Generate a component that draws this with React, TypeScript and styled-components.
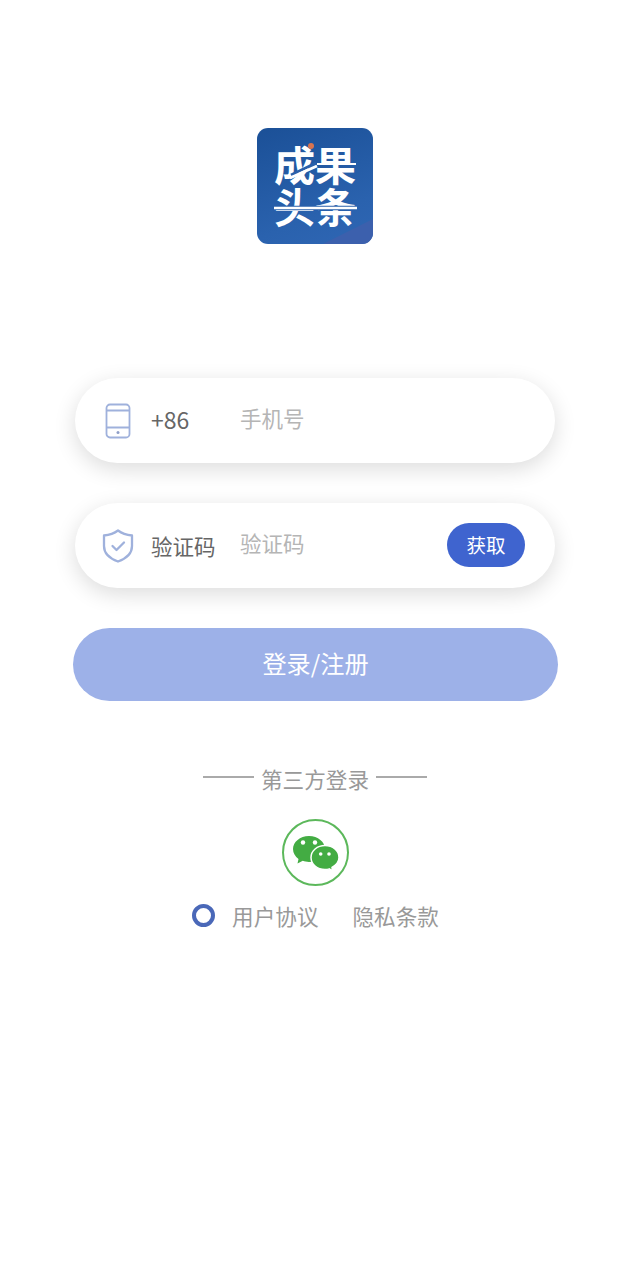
import React from "react";
import styled, { createGlobalStyle } from "styled-components";

const Global = createGlobalStyle`
  html, body { margin: 0; padding: 0; background: #fff; }
  body { font-family: "Noto Sans CJK SC", "Noto Sans", sans-serif; }
`;
const Page = styled.div`
  width: 630px; height: 1280px; display: flex; flex-direction: column; align-items: center;
  padding-top: 128px; box-sizing: border-box; overflow: hidden; background: #fff;
`;
const Logo = styled.div`
  position: relative; width: 116px; height: 116px; border-radius: 11px; overflow: hidden;
  background: linear-gradient(160deg, #1b5097 0%, #2a62ae 70%, #2f66b4 100%);
  display: flex; align-items: center; justify-content: center;
  margin-bottom: 134px;
`;
const LogoOverlay = styled.svg`
  position: absolute; left: 0; top: 0; width: 116px; height: 116px;
`;
const LogoText = styled.div`
  width: 84px; font-weight: 700; font-size: 41px; line-height: 42px; color: #fff;
  letter-spacing: 0; text-align: center; word-break: break-all; margin-top: -5px;
`;
const Field = styled.div`
  width: 480px; height: 85px; border-radius: 43px; background: #fff;
  box-shadow: 0 6px 22px rgba(0, 0, 0, 0.14);
  display: flex; align-items: center; box-sizing: border-box; padding: 0 30px 0 27px;
  margin-bottom: 40px;
`;
const IconSlot = styled.div`
  width: 32px; height: 38px; display: flex; align-items: center; justify-content: center; flex: none; margin-right: 17px;
`;
const Prefix = styled.div<{ $size: number; $shift?: number }>`
  width: 89px; flex: none; font-size: ${(p) => p.$size}px; color: #666; line-height: 30px;
  white-space: nowrap; margin-top: ${(p) => p.$shift ?? 0}px;
`;
const Placeholder = styled.div`
  flex: 1; font-size: 21.5px; color: #b5b5b5; line-height: 30px; padding-bottom: 5px;
`;
const CodeButton = styled.div`
  width: 78px; height: 44px; border-radius: 22px; background: #3f64cf; color: #fff; margin-top: -2px;
  display: flex; align-items: center; justify-content: center; font-size: 19.5px;
`;
const Submit = styled.div`
  width: 485px; height: 73px; margin-left: 1px; border-radius: 37px; background: #9db1e8; color: #fff;
  display: flex; align-items: center; justify-content: center; font-size: 24.2px; padding-bottom: 4px;
  box-sizing: border-box; margin-bottom: 58px;
`;
const Divider = styled.div`
  display: flex; align-items: center; gap: 7px; height: 38px; color: #999; font-size: 21.6px; margin-bottom: 22px;
`;
const Rule = styled.span`
  display: block; width: 51px; height: 2px; background: #aaa; margin-top: -3px;
`;
const WeChat = styled.div`
  width: 67px; height: 67px; box-sizing: border-box; border-radius: 50%; border: 2.500px solid #5cb85b;
  display: flex; align-items: center; justify-content: center; margin-bottom: 14px;
`;
const Agreement = styled.div`
  display: flex; align-items: center; height: 30px; color: #999; font-size: 21.6px; margin-left: 1px;
`;
const Radio = styled.span`
  width: 23px; height: 23px; box-sizing: border-box; border-radius: 50%; border: 4.500px solid #4a68b8;
  margin-right: 17px;
`;
const AgreementLink = styled.span<{ $gap?: number }>`
  margin-right: ${(p) => p.$gap ?? 0}px; white-space: nowrap;
`;

export default function App() {
  return (
    <Page>
      <Global />
      <Logo>
        <LogoText>成果头条</LogoText>
        <LogoOverlay viewBox="0 0 116 116">
          <path d="M66 116 L116 91 V116 Z" fill="#3c60ad" />
          <circle cx="54" cy="18" r="3" fill="#d9744f" />
          <path d="M34 47 L59 35" stroke="#2a60aa" strokeWidth="3" />
          <path d="M33 50 L60 38" stroke="#fff" strokeWidth="3" />
          <path d="M60 36 H99" stroke="#fff" strokeWidth="2" />
          <path d="M17 80 H100" stroke="#2a60aa" strokeWidth="4.500" />
          <path d="M17 80 H100" stroke="#fff" strokeWidth="2.500" />
        </LogoOverlay>
      </Logo>
      <Field>
        <IconSlot>
          <svg width="26" height="36" viewBox="0 0 26 36" fill="none" stroke="#9fb1dc" strokeWidth="1.800">
            <rect x="1.500" y="1.500" width="23" height="33" rx="3.500" />
            <path d="M1.500 7.500H24.500M1.500 24.500H24.500" />
            <circle cx="13" cy="29.500" r="1.500" fill="#8f9fc8" stroke="none" />
          </svg>
        </IconSlot>
        <Prefix $size={23} $shift={-3}>+86</Prefix>
        <Placeholder>手机号</Placeholder>
      </Field>
      <Field>
        <IconSlot>
          <svg width="32" height="34" viewBox="0 0 32 34" fill="none" stroke="#9fb1dc" strokeWidth="2.300" strokeLinejoin="round" strokeLinecap="round">
            <path d="M16 1.500 C20 4.500 25 6 30 6.500 V17 C30 25 23 30 16 32.500 C9 30 2 25 2 17 V6.500 C7 6 12 4.500 16 1.500 Z" />
            <path d="M10.500 17 L14.500 21 L22 13.500" />
          </svg>
        </IconSlot>
        <Prefix $size={21.500} $shift={1}>验证码</Prefix>
        <Placeholder>验证码</Placeholder>
        <CodeButton>获取</CodeButton>
      </Field>
      <Submit>登录/注册</Submit>
      <Divider>
        <Rule />
        第三方登录
        <Rule />
      </Divider>
      <WeChat>
        <svg width="48" height="40" viewBox="0 0 48 40">
          <path d="M18 3 C9 3 2 9 2 16 C2 20.200 4.200 23.500 7.500 25.900 L6.500 30.500 L11.800 27.800 C13.500 28.500 15.700 29 18 29 C27 29 34 23.200 34 16 C34 9 27 3 18 3 Z" fill="#43ac43" />
          <path d="M34 12.500 C26.200 12.500 20 17.800 20 24.500 C20 31.200 26.200 36.500 34 36.500 C35.500 36.500 37 36.300 38.300 35.900 L41.500 38 L41 34.300 C45 32.100 48 28.600 48 24.500 C48 17.800 41.800 12.500 34 12.500 Z" fill="#43ac43" stroke="#fff" strokeWidth="1.500" />
          <circle cx="12" cy="9.500" r="2.200" fill="#fff" />
          <circle cx="24" cy="9.500" r="2.200" fill="#fff" />
          <circle cx="29.700" cy="21" r="1.800" fill="#fff" />
          <circle cx="38" cy="21" r="1.800" fill="#fff" />
        </svg>
      </WeChat>
      <Agreement>
        <Radio />
        <AgreementLink $gap={34}>用户协议</AgreementLink>
        <AgreementLink>隐私条款</AgreementLink>
      </Agreement>
    </Page>
  );
}
